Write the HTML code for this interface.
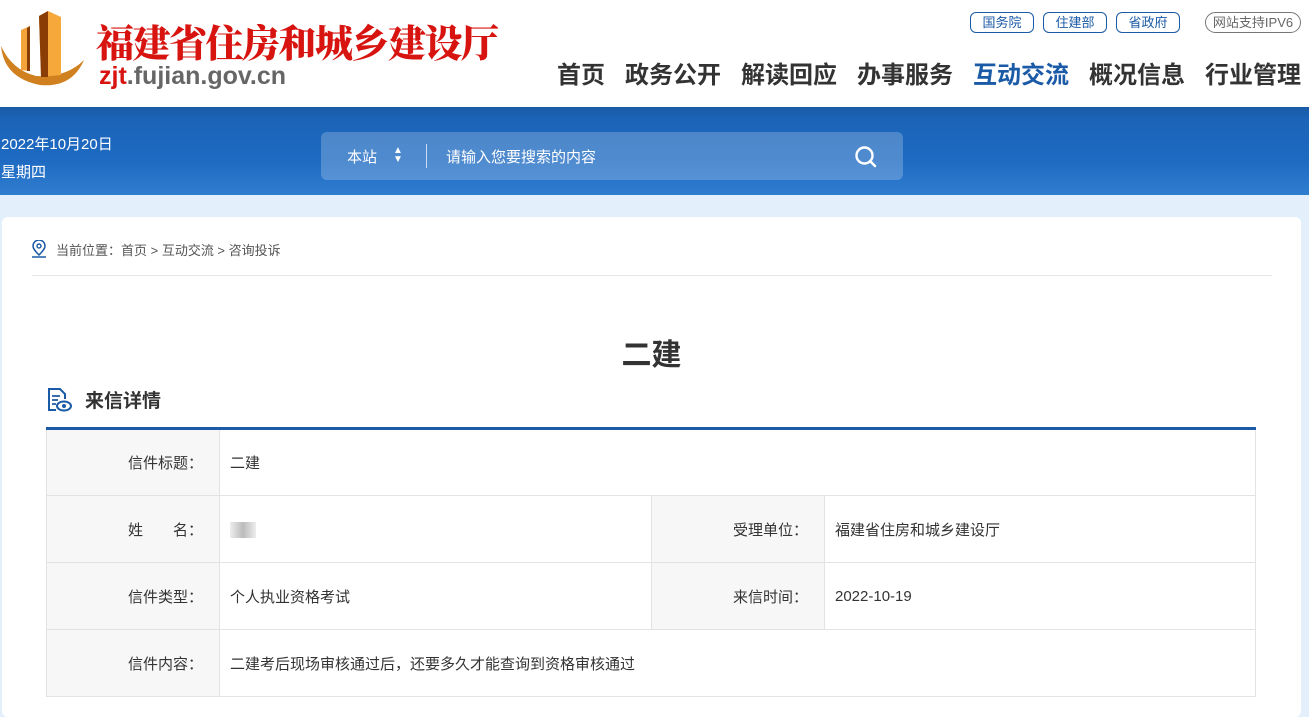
<!DOCTYPE html>
<html><head><meta charset="utf-8"><style>
*{margin:0;padding:0;box-sizing:border-box}
body{width:1309px;height:713px;overflow:hidden;font-family:"Liberation Sans","Noto Sans CJK SC",sans-serif;background:#e4effc;position:relative}
.hdr{position:absolute;left:0;top:0;width:1309px;height:107px;background:#fff}
.title{position:absolute;left:96px;top:13px;font-family:"Noto Serif CJK SC",serif;font-weight:900;font-size:38px;color:#d7140f;letter-spacing:-1.5px}
.dom{position:absolute;left:99px;top:62px;font-size:25px;font-weight:bold;color:#666}
.dom b{color:#d7140f}
.tag{position:absolute;height:21px;border:1px solid #1a5aa6;border-radius:6px;color:#1a5aa6;text-align:center;line-height:19px;font-size:13px}
.nav{position:absolute;top:55px;font-size:24px;font-weight:bold;color:#333}
.banner{position:absolute;left:0;top:107px;width:1309px;height:88px;background:linear-gradient(180deg,#1a5aa6 0,#1b64b8 15%,#1e6ac2 60%,#2f7dd0 100%)}
.date{position:absolute;left:1px;color:#fff;font-size:15px}
.search{position:absolute;left:321px;top:25px;width:582px;height:48px;background:rgba(255,255,255,.22);border-radius:6px;color:#fff;font-size:15px}
.card{position:absolute;left:2px;top:217px;width:1299px;height:500px;background:#fff;border-radius:6px}
.crumb{position:absolute;left:56px;top:240px;font-size:13px;color:#555}
table{position:absolute;left:46px;top:427px;width:1210px;border-collapse:collapse;border-top:3px solid #1a5aa6;font-size:15px;color:#333}
td{border:1px solid #e3e3e3;height:67px;padding:0 10px}
td.l{background:#f7f7f7;text-align:right;width:173px;padding-right:16px;padding-left:0}
</style></head><body>
<div class="hdr">
<svg style="position:absolute;left:0;top:8px" width="90" height="80" viewBox="0 0 90 80">
<path d="M1 38 Q4 70 40 77 Q72 80 84 52 Q66 70 36 68 Q12 62 1 38Z" fill="#d0801e"/>
<path d="M21 22 L30 18 L30 63 L21 62Z" fill="#f4a43a"/>
<path d="M27 20 L30 18 L30 63 L27 63Z" fill="#8a3e05"/>
<path d="M39 8 L48 3 L61 9 L61 67 L41 69Z" fill="#f7a83b"/>
<path d="M39 8 L48 3 L48 69 L41 69Z" fill="#8a3e05"/>
</svg>
<div class="title">福建省住房和城乡建设厅</div>
<div class="dom"><b>zjt</b>.fujian.gov.cn</div>
<div class="tag" style="left:970px;top:12px;width:64px">国务院</div>
<div class="tag" style="left:1043px;top:12px;width:64px">住建部</div>
<div class="tag" style="left:1116px;top:12px;width:64px">省政府</div>
<div class="tag" style="left:1205px;top:12px;width:96px;border-color:#777;color:#666;border-radius:11px">网站支持IPV6</div>
<div class="nav" style="left:557px">首页</div>
<div class="nav" style="left:625px">政务公开</div>
<div class="nav" style="left:741px">解读回应</div>
<div class="nav" style="left:857px">办事服务</div>
<div class="nav" style="left:973px;color:#1a5aa6">互动交流</div>
<div class="nav" style="left:1089px">概况信息</div>
<div class="nav" style="left:1205px">行业管理</div>
</div>
<div class="banner">
<div class="date" style="top:26px">2022年10月20日</div>
<div class="date" style="top:54px">星期四</div>
<div class="search">
<span style="position:absolute;left:26px;top:14px">本站</span>
<span style="position:absolute;left:72px;top:14px;font-size:10px;line-height:9px">▲<br>▼</span>
<span style="position:absolute;left:105px;top:12px;width:1px;height:24px;background:#fff;opacity:.7"></span>
<span style="position:absolute;left:125px;top:14px">请输入您要搜索的内容</span>
<svg style="position:absolute;left:533px;top:13px" width="24" height="24" viewBox="0 0 24 24"><circle cx="10.5" cy="10.5" r="8" fill="none" stroke="#fff" stroke-width="2.4"/><path d="M16 16 L21 21" stroke="#fff" stroke-width="2.6" stroke-linecap="round"/></svg>
</div></div>
<div class="card"></div>
<svg style="position:absolute;left:31px;top:240px" width="16" height="18" viewBox="0 0 16 18"><path d="M8 15 C3 10 2 8 2 6 A6 6 0 0 1 14 6 C14 8 13 10 8 15Z" fill="none" stroke="#1a5aa6" stroke-width="1.5"/><circle cx="8" cy="6" r="2" fill="none" stroke="#1a5aa6" stroke-width="1.4"/><path d="M1 17 H15" stroke="#1a5aa6" stroke-width="1.5"/></svg>
<div class="crumb">当前位置：首页 &gt; 互动交流 &gt; 咨询投诉</div>
<div style="position:absolute;left:32px;top:275px;width:1240px;height:1px;background:#e6e6e6"></div>
<div style="position:absolute;left:0;width:1303px;top:330px;text-align:center;font-size:30px;font-weight:bold;color:#333">二建</div>
<svg style="position:absolute;left:46px;top:387px" width="26" height="26" viewBox="0 0 26 26"><path d="M10 23 H3 V2 H14 L19 7 V12" fill="none" stroke="#1a5aa6" stroke-width="2"/><path d="M6 9 H14 M6 13 H12 M6 17 H10" stroke="#1a5aa6" stroke-width="1.8"/><ellipse cx="18" cy="19" rx="7" ry="4.5" fill="none" stroke="#1a5aa6" stroke-width="2"/><circle cx="18" cy="19" r="2" fill="#1a5aa6"/></svg>
<div style="position:absolute;left:85px;top:386px;font-size:19px;font-weight:bold;color:#333">来信详情</div>
<table>
<tr><td class="l">信件标题：</td><td colspan="3">二建</td></tr>
<tr><td class="l">姓　　名：</td><td style="width:432px"><span style="display:inline-block;width:26px;height:16px;background:linear-gradient(90deg,#eee,#bbb,#eee);vertical-align:middle"></span></td><td class="l">受理单位：</td><td>福建省住房和城乡建设厅</td></tr>
<tr><td class="l">信件类型：</td><td>个人执业资格考试</td><td class="l">来信时间：</td><td>2022-10-19</td></tr>
<tr><td class="l">信件内容：</td><td colspan="3">二建考后现场审核通过后，还要多久才能查询到资格审核通过</td></tr>
</table>
</body></html>
